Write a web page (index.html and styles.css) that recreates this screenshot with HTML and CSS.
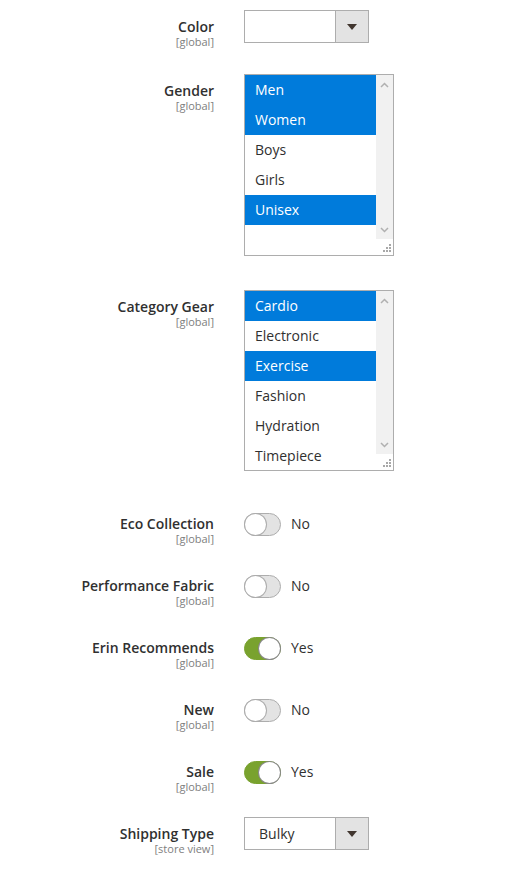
FILE: index.html
```html
<!DOCTYPE html>
<html lang="en">
<head>
    <meta charset="UTF-8">
    <title>Product attributes</title>
    <link rel="stylesheet" href="styles.css">
</head>
<body>
<div class="form">

    <div class="field field-select">
        <div class="label"><span class="name">Color</span><span class="scope">[global]</span></div>
        <div class="select">
            <span class="value"></span>
            <span class="btn"><i class="arrow"></i></span>
        </div>
    </div>

    <div class="field field-gender">
        <div class="label"><span class="name">Gender</span><span class="scope">[global]</span></div>
        <div class="listbox">
            <ul class="options">
                <li class="checked">Men</li>
                <li class="checked">Women</li>
                <li>Boys</li>
                <li>Girls</li>
                <li class="checked">Unisex</li>
            </ul>
            <div class="scrollbar">
                <div class="track">
                    <svg class="chev" width="9" height="6" viewBox="0 0 9 6"><polyline points="1,5 4.5,1.5 8,5" fill="none" stroke="#b0b0b0" stroke-width="1.5"/></svg>
                    <svg class="chev" width="9" height="6" viewBox="0 0 9 6"><polyline points="1,1 4.5,4.5 8,1" fill="none" stroke="#b0b0b0" stroke-width="1.5"/></svg>
                </div>
                <div class="corner">
                    <svg width="9" height="9" viewBox="0 0 9 9" fill="#a8a8a8"><rect x="6" y="0" width="2" height="2"/><rect x="3" y="3" width="2" height="2"/><rect x="6" y="3" width="2" height="2"/><rect x="0" y="6" width="2" height="2"/><rect x="3" y="6" width="2" height="2"/><rect x="6" y="6" width="2" height="2"/></svg>
                </div>
            </div>
        </div>
    </div>

    <div class="field field-category">
        <div class="label"><span class="name">Category Gear</span><span class="scope">[global]</span></div>
        <div class="listbox listbox-full">
            <ul class="options">
                <li class="checked">Cardio</li>
                <li>Electronic</li>
                <li class="checked">Exercise</li>
                <li>Fashion</li>
                <li>Hydration</li>
                <li>Timepiece</li>
            </ul>
            <div class="scrollbar">
                <div class="track">
                    <svg class="chev" width="9" height="6" viewBox="0 0 9 6"><polyline points="1,5 4.5,1.5 8,5" fill="none" stroke="#b0b0b0" stroke-width="1.5"/></svg>
                    <svg class="chev" width="9" height="6" viewBox="0 0 9 6"><polyline points="1,1 4.5,4.5 8,1" fill="none" stroke="#b0b0b0" stroke-width="1.5"/></svg>
                </div>
                <div class="corner">
                    <svg width="9" height="9" viewBox="0 0 9 9" fill="#a8a8a8"><rect x="6" y="0" width="2" height="2"/><rect x="3" y="3" width="2" height="2"/><rect x="6" y="3" width="2" height="2"/><rect x="0" y="6" width="2" height="2"/><rect x="3" y="6" width="2" height="2"/><rect x="6" y="6" width="2" height="2"/></svg>
                </div>
            </div>
        </div>
    </div>

    <div class="field field-toggle">
        <div class="label"><span class="name">Eco Collection</span><span class="scope">[global]</span></div>
        <div class="switch"><span class="track"><span class="knob"></span></span><span class="state">No</span></div>
    </div>

    <div class="field field-toggle">
        <div class="label"><span class="name">Performance Fabric</span><span class="scope">[global]</span></div>
        <div class="switch"><span class="track"><span class="knob"></span></span><span class="state">No</span></div>
    </div>

    <div class="field field-toggle">
        <div class="label"><span class="name">Erin Recommends</span><span class="scope">[global]</span></div>
        <div class="switch on"><span class="track"><span class="knob"></span></span><span class="state">Yes</span></div>
    </div>

    <div class="field field-toggle">
        <div class="label"><span class="name">New</span><span class="scope">[global]</span></div>
        <div class="switch"><span class="track"><span class="knob"></span></span><span class="state">No</span></div>
    </div>

    <div class="field field-toggle field-last-toggle">
        <div class="label"><span class="name">Sale</span><span class="scope">[global]</span></div>
        <div class="switch on"><span class="track"><span class="knob"></span></span><span class="state">Yes</span></div>
    </div>

    <div class="field field-select">
        <div class="label"><span class="name">Shipping Type</span><span class="scope">[store view]</span></div>
        <div class="select">
            <span class="value">Bulky</span>
            <span class="btn"><i class="arrow"></i></span>
        </div>
    </div>

</div>
</body>
</html>
```

FILE: styles.css
```css
*{
    margin: 0;
    padding: 0;
    box-sizing: border-box;
    list-style: none;
}

body{
    background: #ffffff;
    font-family: "Open Sans", "Noto Sans", sans-serif;
    font-size: 14px;
    color: #303030;
}

.form{
    padding-top: 10px;
    display: flex;
    flex-direction: column;
}

.field{
    display: flex;
    align-items: flex-start;
    gap: 30px;
}

.field-select{ height: 64px; }
.field-gender{ height: 216px; }
.field-category{ height: 223px; }
.field-toggle{ height: 62px; }
.field-last-toggle{ height: 56px; }

.label{
    width: 214px;
    flex: none;
    display: flex;
    flex-direction: column;
    align-items: flex-end;
    padding-top: 8px;
}

.field-toggle .label{
    padding-top: 2px;
}

.name{
    font-weight: 600;
    line-height: 18px;
}

.scope{
    font-size: 11px;
    line-height: 11px;
    color: #808080;
}

/* select */
.select{
    width: 125px;
    height: 33px;
    border: 1px solid #adadad;
    display: flex;
    background: #ffffff;
}

.select .value{
    flex: 1;
    padding-left: 14px;
    line-height: 31px;
}

.select .btn{
    width: 33px;
    border-left: 1px solid #adadad;
    background: #e3e3e3;
    display: flex;
    align-items: center;
    justify-content: center;
}

.arrow{
    width: 0;
    height: 0;
    border-left: 5px solid transparent;
    border-right: 5px solid transparent;
    border-top: 6px solid #41362f;
}

/* multi select list */
.listbox{
    width: 150px;
    height: 182px;
    border: 1px solid #adadad;
    display: flex;
    overflow: hidden;
}

.listbox-full{
    height: 181px;
}

.options{
    flex: 1;
}

.options li{
    height: 30px;
    line-height: 30px;
    padding-left: 10px;
}

.options .checked{
    background: #007bdb;
    color: #ffffff;
}

.scrollbar{
    width: 17px;
    display: flex;
    flex-direction: column;
}

.scrollbar .track{
    flex: 1;
    background: #f1f1f1;
    display: flex;
    flex-direction: column;
    justify-content: space-between;
    align-items: center;
    padding: 7px 0 6px;
}

.scrollbar .corner{
    height: 16px;
    display: flex;
    align-items: flex-end;
    justify-content: flex-end;
    padding: 0 1px 2px 0;
}

.chev{
    display: block;
}

/* toggle */
.switch{
    display: flex;
    align-items: flex-start;
    gap: 10px;
    height: 23px;
}

.switch .track{
    width: 37px;
    height: 23px;
    border: 1px solid #adadad;
    border-radius: 12px;
    background: #e3e3e3;
    display: flex;
    align-items: center;
}

.switch .knob{
    width: 21px;
    height: 21px;
    border-radius: 50%;
    background: #ffffff;
    box-shadow: 0 0 0 1px #adadad;
}

.switch.on .track{
    background: #79a22e;
    border-color: #79a22e;
    justify-content: flex-end;
}

.switch.on .knob{
    box-shadow: 0 0 0 1px #8a8a8a;
}

.state{
    line-height: 21px;
}
```
